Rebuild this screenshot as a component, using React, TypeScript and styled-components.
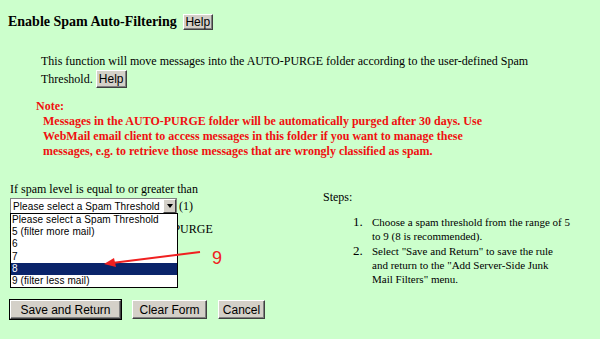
import React from "react";
import styled, { createGlobalStyle } from "styled-components";

const GlobalStyle = createGlobalStyle`
  html, body {
    margin: 0;
    padding: 0;
    background: #ccffcc;
  }
  body {
    font-family: "Liberation Serif", "Times New Roman", serif;
    color: #000;
  }
`;

const Page = styled.div`
  position: relative;
  width: 600px;
  height: 339px;
  overflow: hidden;
  background: #ccffcc;
`;

const TitleRow = styled.div`
  display: flex;
  align-items: center;
  gap: 6px;
  padding: 13px 0 0 8px;
  height: 18px;
`;

const Title = styled.h3`
  margin: 0;
  font-size: 14px;
  font-weight: bold;
  line-height: 18px;
`;

const WinButton = styled.button<{ $w: number; $h?: number; $default?: boolean }>`
  box-sizing: border-box;
  width: ${(p) => p.$w}px;
  height: ${(p) => p.$h ?? 19}px;
  padding: 0;
  font-family: "Liberation Sans", Arial, sans-serif;
  font-size: 12px;
  color: #000;
  background: #d4d0c8;
  border: 1px solid;
  border-color: #ffffff #404040 #404040 #ffffff;
  box-shadow: inset -1px -1px 0 #808080;
  outline: ${(p) => (p.$default ? "1px solid #000" : "none")};
  cursor: pointer;
`;

const Description = styled.p`
  margin: 0;
  padding: 22px 0 0 41px;
  width: 500px;
  font-size: 12px;
  line-height: 17px;
`;

const Note = styled.div`
  padding: 11px 0 0 36px;
  color: #f01010;
  font-weight: bold;
  font-size: 12px;
  line-height: 15px;
`;

const NoteBody = styled.div`
  padding-left: 7px;
  width: 500px;
  white-space: nowrap;
`;

const Lower = styled.div`
  display: flex;
  padding: 23px 0 0 10px;
`;

const LeftCol = styled.div`
  position: relative;
  width: 313px;
  font-size: 12px;
`;

const Label = styled.div`
  line-height: 15px;
  height: 15px;
`;

const SelectRow = styled.div`
  display: flex;
  align-items: center;
  gap: 2px;
  margin-top: 1px;
  font-size: 12px;
`;

const SelectBox = styled.div`
  position: relative;
  flex-shrink: 0;
  overflow: hidden;
  box-sizing: border-box;
  display: flex;
  align-items: center;
  width: 167px;
  height: 16px;
  padding-left: 2px;
  background: #fff;
  border: 1px solid #808080;
  font-family: "Liberation Sans", Arial, sans-serif;
  font-size: 10px;
  letter-spacing: 0.1px;
  white-space: nowrap;
`;

const SelectArrow = styled.div`
  position: absolute;
  right: 0;
  top: 0;
  bottom: 0;
  width: 13px;
  box-sizing: border-box;
  background: #d4d0c8;
  border: 1px solid;
  border-color: #fff #404040 #404040 #fff;
  display: flex;
  align-items: center;
  justify-content: center;
  &::after {
    content: "";
    border-left: 3px solid transparent;
    border-right: 3px solid transparent;
    border-top: 4px solid #000;
  }
`;

const OptionList = styled.div`
  position: absolute;
  left: 0;
  top: 31px;
  width: 168px;
  box-sizing: border-box;
  background: #fff;
  border: 1px solid #000;
  font-family: "Liberation Sans", Arial, sans-serif;
  font-size: 10px;
  letter-spacing: 0.1px;
  z-index: 2;
`;

const Option = styled.div<{ $selected?: boolean }>`
  height: 12.2px;
  line-height: 12px;
  padding-left: 1px;
  white-space: nowrap;
  color: ${(p) => (p.$selected ? "#fff" : "#000")};
  background: ${(p) => (p.$selected ? "#0a246a" : "transparent")};
`;

const HiddenLine = styled.div`
  margin-top: 8px;
  line-height: 15px;
  white-space: nowrap;
`;

const Annotation = styled.svg`
  position: absolute;
  left: 93px;
  top: 68px;
  z-index: 3;
  overflow: visible;
`;

const AnnotationDigit = styled.span`
  position: absolute;
  left: 202px;
  top: 66px;
  z-index: 3;
  font-family: "Liberation Sans", Arial, sans-serif;
  font-size: 18px;
  color: #f02020;
`;

const RightCol = styled.div`
  padding-top: 8px;
  font-size: 12px;
`;

const StepsTitle = styled.div`
  line-height: 14px;
`;

const StepList = styled.div`
  display: flex;
  flex-direction: column;
  gap: 1px;
  margin-top: 11px;
  padding-left: 30px;
`;

const Step = styled.div`
  display: flex;
  font-size: 11px;
  line-height: 14px;
`;

const StepNum = styled.span`
  width: 19px;
  font-size: 13px;
`;

const StepText = styled.span`
  width: 215px;
  white-space: nowrap;
`;

const ButtonRow = styled.div`
  display: flex;
  gap: 11px;
  padding: 14px 0 0 10px;
`;

const options = [
  "Please select a Spam Threshold",
  "5 (filter more mail)",
  "6",
  "7",
  "8",
  "9 (filter less mail)",
];

export default function App() {
  return (
    <Page>
      <GlobalStyle />
      <TitleRow>
        <Title>Enable Spam Auto-Filtering</Title>
        <WinButton $w={30} $h={16}>Help</WinButton>
      </TitleRow>

      <Description>
        This function will move messages into the AUTO-PURGE folder according to the user-defined Spam
        Threshold.{" "}
        <WinButton $w={31} $h={18}>Help</WinButton>
      </Description>

      <Note>
        Note:
        <NoteBody>
          Messages in the AUTO-PURGE folder will be automatically purged after 30 days. Use
          <br />
          WebMail email client to access messages in this folder if you want to manage these
          <br />
          messages, e.g. to retrieve those messages that are wrongly classified as spam.
        </NoteBody>
      </Note>

      <Lower>
        <LeftCol>
          <Label>If spam level is equal to or greater than</Label>
          <SelectRow>
            <SelectBox>
              Please select a Spam Threshold
              <SelectArrow />
            </SelectBox>
            (1)
          </SelectRow>
          <HiddenLine>then move the message to AUTO-PURGE</HiddenLine>

          <OptionList>
            {options.map((o) => (
              <Option key={o} $selected={o === "8"}>
                {o}
              </Option>
            ))}
          </OptionList>

          <Annotation width="110" height="20" viewBox="0 0 110 20">
            <line x1="97" y1="2" x2="9" y2="13" stroke="#f02020" strokeWidth="2" />
            <polygon points="1,14 11,8 13,17" fill="#f02020" />
          </Annotation>
          <AnnotationDigit>9</AnnotationDigit>
        </LeftCol>

        <RightCol>
          <StepsTitle>Steps:</StepsTitle>
          <StepList>
            <Step>
              <StepNum>1.</StepNum>
              <StepText>
                Choose a spam threshold from the range of 5
                <br />
                to 9 (8 is recommended).
              </StepText>
            </Step>
            <Step>
              <StepNum>2.</StepNum>
              <StepText>
                Select "Save and Return" to save the rule
                <br />
                and return to the "Add Server-Side Junk
                <br />
                Mail Filters" menu.
              </StepText>
            </Step>
          </StepList>
        </RightCol>
      </Lower>

      <ButtonRow>
        <WinButton $w={111} $default>Save and Return</WinButton>
        <WinButton $w={75}>Clear Form</WinButton>
        <WinButton $w={47}>Cancel</WinButton>
      </ButtonRow>
    </Page>
  );
}
